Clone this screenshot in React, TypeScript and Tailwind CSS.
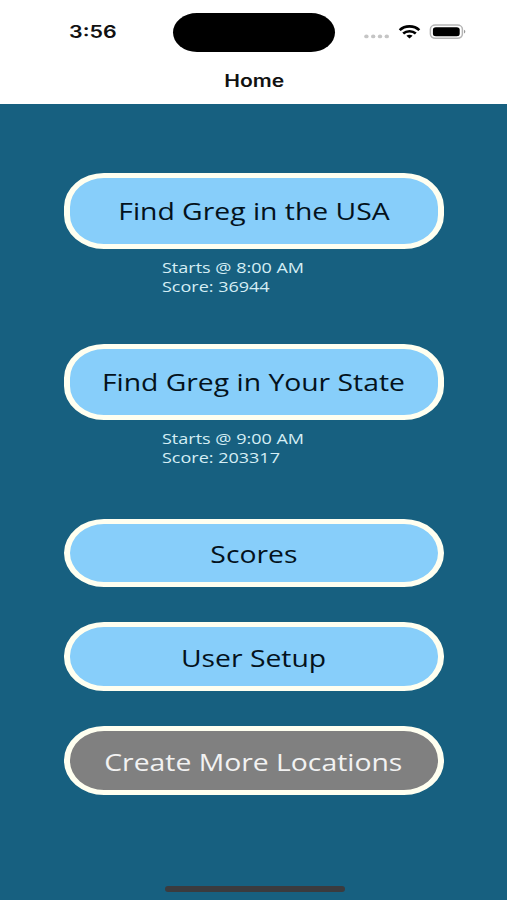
import React from 'react';

interface MenuButtonProps {
    label: string;
    tall?: boolean;
    disabled?: boolean;
}

const MenuButton = ({ label, tall = false, disabled = false }: MenuButtonProps) => (
    <button
        disabled={disabled}
        className={`flex w-[380px] shrink-0 items-center justify-center rounded-[40px/34px] border-x-[6.5px] border-y-[5.5px] border-[#fffff0] text-2xl whitespace-nowrap ${tall ? 'h-[76px] pt-px' : 'h-[68.5px] pt-[2px]'} ${disabled ? 'bg-[#808080] text-[#f2f2f2]' : 'bg-[#87cefa] text-[#04121c]'}`}
    >
        <span className="block scale-x-[1.18]">{label}</span>
    </button>
);

interface GameInfoProps {
    start: string;
    score: number;
}

const GameInfo = ({ start, score }: GameInfoProps) => (
    <div className="mt-[9px] ml-[162px] h-[38px] w-fit origin-left scale-x-[1.2] self-start text-[15px] leading-[19px] whitespace-nowrap text-[#d5eef5]">
        <p>Starts @ {start}</p>
        <p>Score: {score}</p>
    </div>
);

const StatusBar = () => (
    <div className="flex h-[64px] items-start">
        <div className="w-[173px] pt-[20px] pl-[69px]">
            <span className="block w-fit origin-left scale-x-[1.26] text-[17px] leading-6 font-semibold">3:56</span>
        </div>
        <div className="mt-[12.5px] h-[39px] w-[161.5px] rounded-[24px/19.5px] bg-black" />
        <svg className="mt-[20px] ml-[28px]" width="104" height="24" viewBox="0 0 104 24">
            {/* signal */}
            <g fill="#c5c5c5">
                <ellipse cx="3.4" cy="16.4" rx="2.2" ry="1.9" />
                <ellipse cx="10.2" cy="16.4" rx="2.2" ry="1.9" />
                <ellipse cx="17" cy="16.4" rx="2.2" ry="1.9" />
                <ellipse cx="23.8" cy="16.4" rx="2.2" ry="1.9" />
            </g>
            {/* wifi */}
            <g fill="none" stroke="#000" strokeWidth="2.7">
                <path d="M36.7 10.1C41.9 5.1 51.1 5.1 56.3 10.1" />
                <path d="M40.2 13.5C43.6 10.5 49.4 10.5 52.8 13.5" />
            </g>
            <path d="M46.5 18.4L43.4 15.8C45 14.3 48 14.3 49.6 15.8Z" fill="#000" />
            {/* battery */}
            <rect x="67.4" y="5" width="32" height="13.3" rx="5" ry="4.2" fill="none" stroke="#b5b5b5" strokeWidth="1.5" />
            <rect x="69.9" y="7.2" width="26.8" height="9" rx="3" ry="2.5" fill="#000" />
            <path d="M101 9.8C102.8 10.3 102.8 13 101 13.5Z" fill="#999" />
        </svg>
    </div>
);

const App = () => {
    return (
        <div className="flex h-[900px] w-[507px] flex-col overflow-hidden bg-[#176080] font-['Open_Sans',sans-serif]">
            <header className="h-[104px] shrink-0 bg-white font-['Inter',sans-serif] text-[#111]">
                <StatusBar />
                <h1 className="mt-[5px] flex justify-center pl-px text-[17px] leading-6 font-semibold">
                    <span className="block scale-x-[1.24]">Home</span>
                </h1>
            </header>

            <main className="flex flex-1 flex-col items-center pt-[68.6px]">
                <MenuButton label="Find Greg in the USA" tall />
                <GameInfo start="8:00 AM" score={36944} />
                <div className="h-[48.2px] shrink-0" />
                <MenuButton label="Find Greg in Your State" tall />
                <GameInfo start="9:00 AM" score={203317} />
                <div className="mt-[51.8px] flex flex-col gap-[35.4px]">
                    <MenuButton label="Scores" />
                    <MenuButton label="User Setup" />
                    <MenuButton label="Create More Locations" disabled />
                </div>
            </main>

            <div className="mb-[8px] ml-[164.5px] h-[6px] w-[180px] shrink-0 rounded-[3px] bg-[#3b3b3e]" />
        </div>
    );
};

export default App;
